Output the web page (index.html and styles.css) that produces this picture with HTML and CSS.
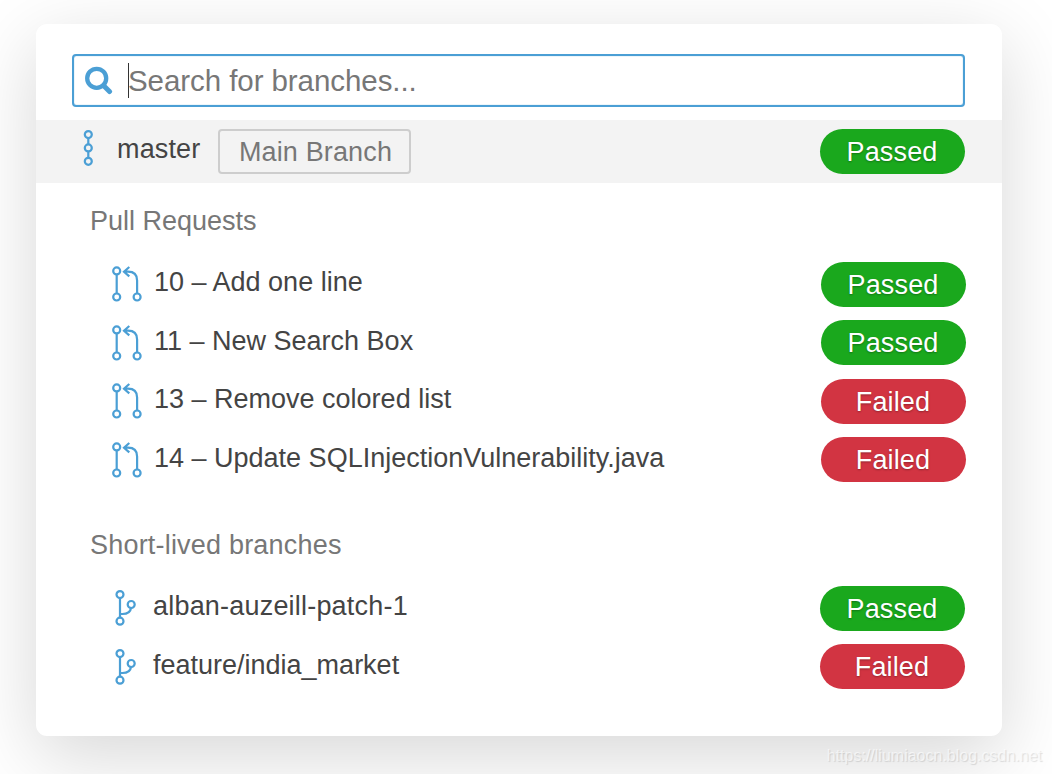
FILE: index.html
```html
<!DOCTYPE html>
<html lang="en">
<head>
<meta charset="utf-8">
<title>Branches</title>
<link rel="stylesheet" href="styles.css">
</head>
<body>
<svg width="0" height="0" class="defs" aria-hidden="true">
  <symbol id="pull" viewBox="0 0 32 36">
    <circle cx="4.7" cy="4.9" r="3.5"/><circle cx="4.7" cy="31" r="3.5"/><circle cx="25.1" cy="31" r="3.5"/>
    <path d="M4.7 8.4V27.5M25.1 27.5V14.5Q25.1 5.7 16 5.7H12.3M17.3 1L12 5.7L17.3 10.4"/>
  </symbol>
  <symbol id="branch" viewBox="0 0 32 36">
    <circle cx="8" cy="4.6" r="3.5"/><circle cx="8" cy="31.2" r="3.5"/><circle cx="19.2" cy="14.5" r="3.5"/>
    <path d="M8 8.1V27.7M8 24H10.5Q18.2 24 19 18"/>
  </symbol>
</svg>
<main class="card">
  <div class="search">
    <svg class="search-icon" width="30" height="30" viewBox="0 0 30 30"><circle cx="13.7" cy="12.3" r="9.5"/><path class="handle" d="M20.5 19.5L26.5 25.5"/></svg>
    <span class="caret"></span><span class="placeholder">Search for branches...</span>
  </div>
  <div class="row main-row">
    <svg class="icon main-icon" width="12" height="38" viewBox="0 0 12 38"><circle cx="6.3" cy="4.6" r="3.5"/><circle cx="6.3" cy="17.9" r="3.5"/><circle cx="6.3" cy="31.3" r="3.5"/><path d="M6.3 8.1V14.4M6.3 21.4V27.8"/></svg>
    <span class="name">master</span>
    <span class="tag">Main Branch</span>
    <span class="pill passed">Passed</span>
  </div>
  <h2 class="heading">Pull Requests</h2>
  <div class="list pulls">
    <div class="row"><svg class="icon" width="32" height="36"><use href="#pull"/></svg><span class="name">10 – Add one line</span><span class="pill passed">Passed</span></div>
    <div class="row"><svg class="icon" width="32" height="36"><use href="#pull"/></svg><span class="name">11 – New Search Box</span><span class="pill passed">Passed</span></div>
    <div class="row"><svg class="icon" width="32" height="36"><use href="#pull"/></svg><span class="name">13 – Remove colored list</span><span class="pill failed">Failed</span></div>
    <div class="row"><svg class="icon" width="32" height="36"><use href="#pull"/></svg><span class="name">14 – Update SQLInjectionVulnerability.java</span><span class="pill failed">Failed</span></div>
  </div>
  <h2 class="heading wide">Short-lived branches</h2>
  <div class="list branches">
    <div class="row"><svg class="icon" width="32" height="36"><use href="#branch"/></svg><span class="name wide">alban-auzeill-patch-1</span><span class="pill passed">Passed</span></div>
    <div class="row"><svg class="icon" width="32" height="36"><use href="#branch"/></svg><span class="name">feature/india_market</span><span class="pill failed">Failed</span></div>
  </div>
</main>
<div class="watermark">https://liumiaocn.blog.csdn.net</div>
</body>
</html>
```
FILE: styles.css
```css
* { box-sizing: border-box; }
body {
  margin: 0;
  height: 774px;
  padding: 24px 50px 0 36px;
  overflow: hidden;
  background: #fff;
  font: 27px/32px "Liberation Sans", Arial, sans-serif;
  color: #444;
}
.defs { position: absolute; }
.card {
  height: 712px;
  padding-top: 30px;
  border-radius: 11px;
  background: #fff;
  box-shadow: 0 20px 76px rgba(0, 0, 0, .16);
}
.search {
  display: flex;
  align-items: center;
  width: 893px;
  height: 53px;
  margin: 0 0 13px 36px;
  padding-left: 9px;
  border: 2px solid #4b9fd5;
  border-radius: 4px;
  box-shadow: inset 0 0 1px #4b9fd5;
  font-size: 29.5px;
  letter-spacing: -.07px;
  color: #777;
}
.search-icon { fill: none; stroke: #4b9fd5; stroke-width: 4.3; stroke-linecap: round; }
.handle { stroke-width: 5; }
.caret { width: 1px; height: 35px; margin-left: 15px; background: #333; }
.placeholder { margin-left: -1px; }
.row { display: flex; align-items: center; height: 58.5px; }
.main-row { height: 63px; padding: 0 37px 0 46px; background: #f3f3f3; }
.main-icon { margin: -6px 23px 0 0; }
.icon { fill: none; stroke: #4b9fd5; stroke-width: 2.2; }
.name { padding-bottom: 4px; white-space: pre; }
.main-row .name { width: 83px; padding-bottom: 6px; letter-spacing: .15px; }
.tag {
  width: 193px;
  height: 45px;
  margin-left: 18px;
  border: 2px solid #cdcdcd;
  border-radius: 4px;
  padding-left: 2px;
  text-align: center;
  line-height: 43px;
  letter-spacing: .15px;
  color: #777;
}
.pill {
  width: 145px;
  height: 45px;
  margin-left: auto;
  border-radius: 23px;
  text-align: center;
  line-height: 47px;
  letter-spacing: .15px;
  padding-right: 1px;
  color: #fff;
  text-shadow: 0 1px 2px rgba(0, 0, 0, .3);
}
.passed { background: #1aa81d; }
.failed { background: #d23442; }
.heading {
  margin: 0;
  padding: 22px 0 18px 54px;
  font-size: 27px;
  line-height: 32px;
  font-weight: 400;
  color: #777;
}
.wide { letter-spacing: .2px; }
.list .icon { margin-right: 10px; }
.pulls { padding: 0 36px 0 76px; margin-bottom: 18px; }
.branches { padding: 0 37px 0 76px; }
.branches .icon { margin-right: 9px; }
.watermark {
  position: absolute;
  right: 10px;
  bottom: 8px;
  font-size: 16px;
  line-height: 20px;
  color: rgba(255, 255, 255, .6);
  text-shadow: 1px 1px 1px rgba(0, 0, 0, .12);
}
```
